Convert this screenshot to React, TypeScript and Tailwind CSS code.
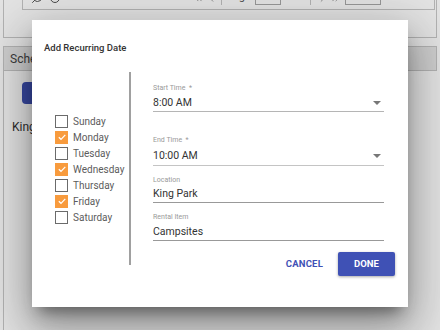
import { Search, RotateCw, ChevronLeft, ChevronRight, ChevronsLeft, ChevronsRight } from 'lucide-react';

const days = [
  { name: 'Sunday', on: false },
  { name: 'Monday', on: true },
  { name: 'Tuesday', on: false },
  { name: 'Wednesday', on: true },
  { name: 'Thursday', on: false },
  { name: 'Friday', on: true },
  { name: 'Saturday', on: false },
];

function Box({ on }: { on: boolean }) {
  if (on) {
    return (
      <span className="flex h-[13px] w-[13px] shrink-0 items-center justify-center bg-[#f89b3d]">
        <svg width="10" height="10" viewBox="0 0 10 10" fill="none">
          <path d="M1.8 5.2 L4 7.3 L8.3 2.8" stroke="white" strokeWidth="1.2" />
        </svg>
      </span>
    );
  }
  return <span className="h-[13px] w-[13px] shrink-0 border-[1.5px] border-[#6b6b6b] bg-white" />;
}

function Arrow() {
  return (
    <svg width="8" height="4" viewBox="0 0 8 4" className="mr-[3px]">
      <path d="M0 0 L8 0 L4 4 Z" fill="#777" />
    </svg>
  );
}

export default function App() {
  return (
    <div className="relative h-[330px] w-[440px] overflow-hidden bg-white font-['Roboto',sans-serif]">
      {/* page behind the dialog */}
      <div className="mx-[3px] h-[38px] border-x border-b border-[#c8c8c8]">
        <div className="ml-[18px] mr-px flex h-[10px] items-end border-x border-b border-[#c8c8c8] text-[11px] leading-[14px] text-[#555]">
          <div className="mb-[5px] ml-[8px] flex gap-[6px] text-[#555]">
            <Search size={12} className="-scale-x-100" />
            <RotateCw size={12} />
          </div>
          <div className="mb-[5px] ml-[132px] flex items-center gap-[2px] text-[#999]">
            <ChevronsLeft size={11} />
            <ChevronLeft size={11} />
          </div>
          <span className="mx-[4px] mb-[4px] h-[14px] w-px bg-[#c8c8c8]" />
          <span className="mb-[5px]">Page</span>
          <span className="mx-[4px] mb-[4px] h-[18px] w-[26px] border border-[#aaa] bg-white text-center leading-[16px]">1</span>
          <span className="mb-[5px]">of 0</span>
          <span className="mx-[6px] mb-[4px] h-[14px] w-px bg-[#c8c8c8]" />
          <div className="mb-[5px] flex items-center gap-[2px] text-[#999]">
            <ChevronRight size={11} />
            <ChevronsRight size={11} />
          </div>
          <span className="mb-[4px] ml-[4px] flex h-[18px] w-[36px] items-center justify-between border border-[#aaa] bg-white pl-[7px] pr-[4px]">
            10
            <svg width="6" height="3" viewBox="0 0 6 3"><path d="M0 0 L6 0 L3 3 Z" fill="#555" /></svg>
          </span>
        </div>
      </div>
      <div className="mx-[3px] mt-[8px] flex h-[25px] items-center border border-[#c8c8c8] bg-[#e8e8e8] pl-[6px] text-[12px] text-[#444]">
        Schedule
      </div>
      <div className="mx-[3px] h-[300px] border-l border-[#c8c8c8] pl-[18px] pt-[11px]">
        <div className="h-[22px] w-[80px] rounded-sm bg-[#3f51b5]" />
        <div className="ml-[-10px] mt-[14px] text-[12px] text-[#333]">King Park</div>
      </div>

      {/* overlay */}
      <div className="absolute inset-0 bg-black/[0.11]" />

      {/* dialog */}
      <div className="absolute left-[32px] top-[20px] h-[287px] w-[376px] bg-white shadow-[0_11px_15px_-7px_rgba(0,0,0,0.45),0_24px_38px_3px_rgba(0,0,0,0.22),0_9px_46px_8px_rgba(0,0,0,0.16)]">
        <div className="pl-[12px] pt-[22px] text-[9.5px] font-medium leading-[12px] text-[#333]">Add Recurring Date</div>
        <div className="mt-[18px] flex">
          <div className="ml-[12px] h-[193px] w-[87px] shrink-0 border-r-2 border-[#a0a0a0] pl-[11px] pt-[41px]">
            {days.map((d) => (
              <div key={d.name} className="flex h-[16px] items-center gap-[5px]">
                <Box on={d.on} />
                <span className="text-[10px] text-[#5c5c5c]">{d.name}</span>
              </div>
            ))}
          </div>
          <div className="flex flex-1 flex-col pl-[22px] pr-[13px] pt-[12px]">
            <div className="w-[231px]">
              <div className="text-[7px] leading-[9px] text-[#999]">Start Time&nbsp; *</div>
              <div className="mt-[3px] box-content flex h-[14px] items-center justify-between border-b border-[#b5b5b5] pb-[1px] text-[10.5px] leading-[14px] text-[#333]">
                8:00 AM
                <Arrow />
              </div>
              <div className="mt-[24px] text-[7px] leading-[9px] text-[#999]">End Time&nbsp; *</div>
              <div className="mt-[4px] box-content flex h-[14px] items-center justify-between border-b border-[#c4c4c4] pb-[2px] text-[10.5px] leading-[14px] text-[#333]">
                10:00 AM
                <Arrow />
              </div>
              <div className="mt-[10px] text-[7px] leading-[9px] text-[#999]">Location</div>
              <div className="mt-[2px] box-content h-[14px] border-b border-[#999] pb-px text-[10.5px] leading-[14px] text-[#333]">King Park</div>
              <div className="mt-[10px] text-[7px] leading-[9px] text-[#999]">Rental Item</div>
              <div className="mt-[3px] box-content h-[14px] border-b border-[#999] pb-px text-[10.5px] leading-[14px] text-[#333]">Campsites</div>
            </div>
            <div className="mt-[11px] flex items-center justify-end gap-[15px]">
              <button className="text-[9.5px] font-bold tracking-[0.2px] text-[#3f51b5]">CANCEL</button>
              <button className="h-[24px] w-[57px] rounded-[2px] bg-[#3f51b5] text-[9.5px] font-bold text-white shadow-[0_1px_3px_rgba(0,0,0,0.35)]">DONE</button>
            </div>
          </div>
        </div>
      </div>
    </div>
  );
}
